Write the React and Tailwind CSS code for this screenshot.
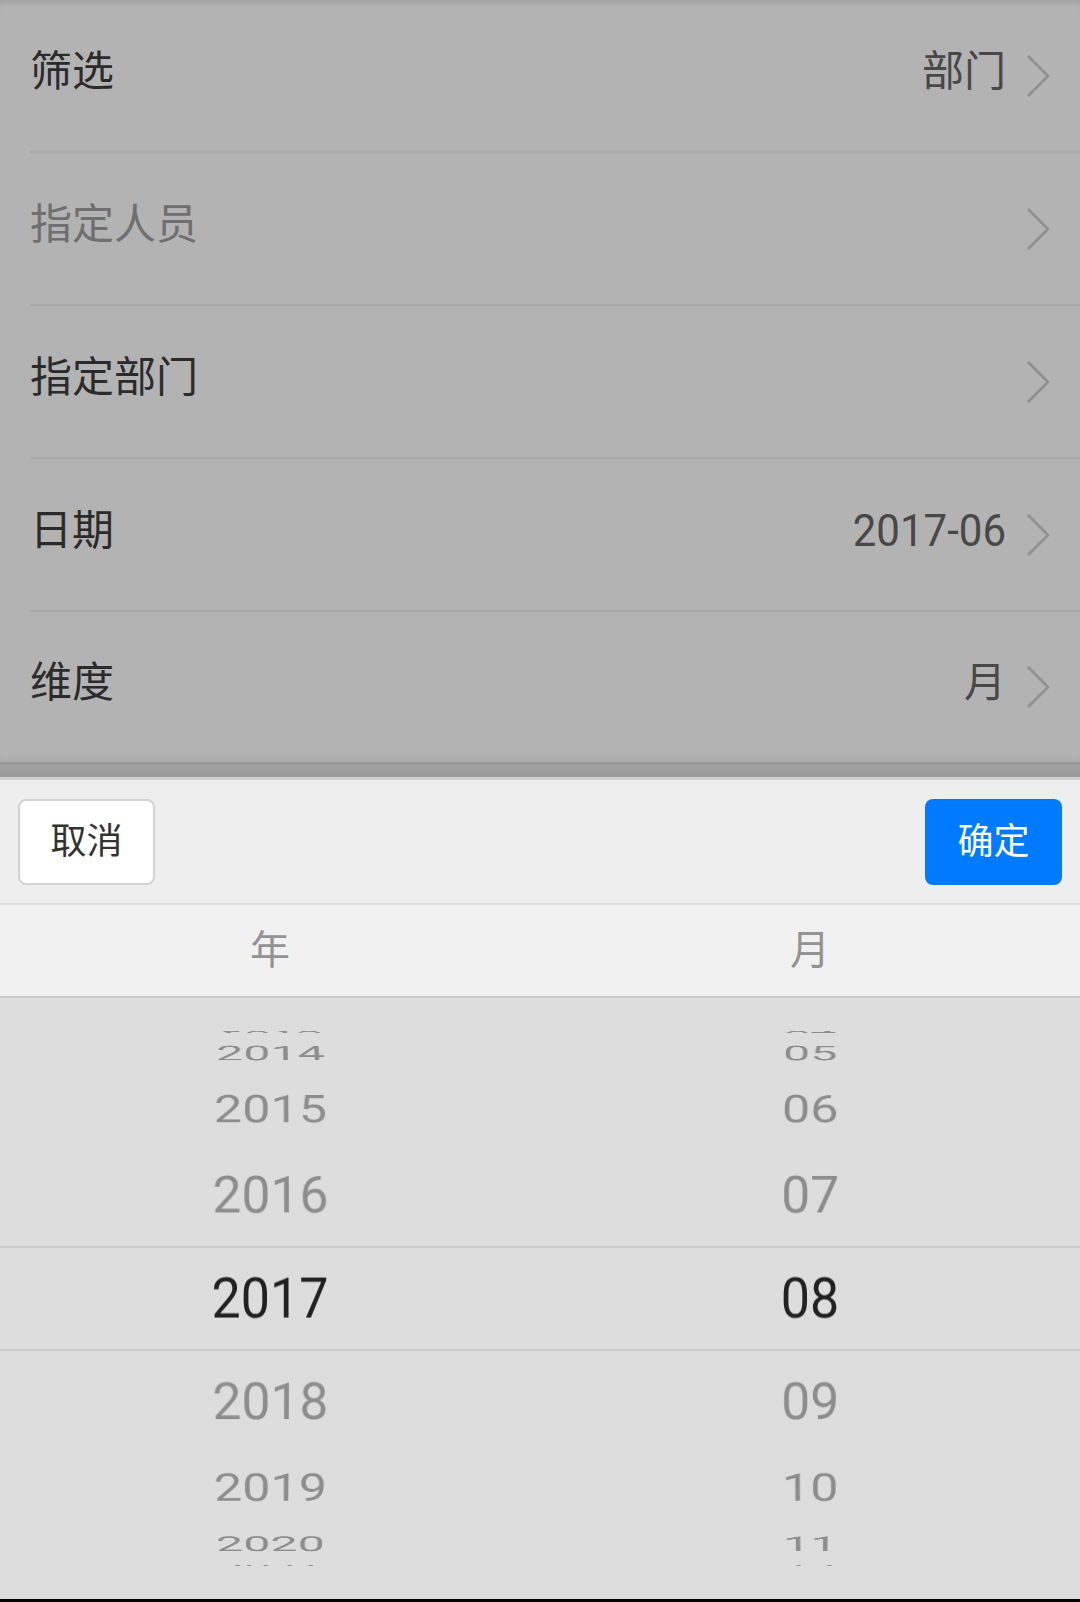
import React from 'react';

const rows = [
  { label: '筛选', value: '部门' },
  { label: '指定人员', value: '', muted: true },
  { label: '指定部门', value: '' },
  { label: '日期', value: '2017-06', digits: true },
  { label: '维度', value: '月' },
];

const years = ['2013', '2014', '2015', '2016', '2017', '2018', '2019', '2020', '2021'];
const months = ['04', '05', '06', '07', '08', '09', '10', '11', '12'];

const Chevron = () => (
  <svg width="24" height="44" viewBox="0 0 24 44" fill="none" className="shrink-0">
    <path d="M2 2 L22 22 L2 42" stroke="#8f8f8f" strokeWidth="2.6" />
  </svg>
);

// 滚轮列：每一项绕中心旋转 20°
const Wheel = ({ items, selected }) => (
  <div className="flex-1 grid place-items-center [perspective:2000px]">
    {items.map((item, i) => {
      const k = i - selected;
      return (
        <div
          key={item}
          className={`col-start-1 row-start-1 text-[52px] leading-none [backface-visibility:hidden] ${k === 0 ? 'text-[#222222]' : 'text-[#8d8d8d]'}`}
          style={{ transform: `translateZ(-305px) rotateX(${-k * 20}deg) translateZ(305px) scaleY(1.08)` }}
        >
          {item}
        </div>
      );
    })}
  </div>
);

export default function App() {
  return (
    <div
      className="w-[1080px] h-[1602px] flex flex-col overflow-hidden bg-[#b3b3b3]"
      style={{ fontFamily: 'Roboto, "Noto Sans CJK SC", sans-serif' }}
    >
      {/* 被遮罩的列表 */}
      <div className="flex flex-col shrink-0 shadow-[inset_0_7px_7px_-5px_rgba(0,0,0,0.12),inset_0_-9px_9px_-7px_rgba(0,0,0,0.06)]">
        {rows.map((row, i) => (
          <div
            key={row.label}
            className={`ml-[30px] pr-[30px] flex items-center justify-between ${i < rows.length - 1 ? 'h-[153px] border-b-2 border-[#a9a9a9]' : 'h-[150px]'}`}
          >
            <span className={`mb-[8px] text-[42px] leading-none ${row.muted ? 'text-[#6f6f6f]' : 'text-[#2b2b2b]'}`}>
              {row.label}
            </span>
            <div className="flex items-center gap-[20px]">
              {row.value && (
                <span className={`mb-[8px] text-[42px] leading-none text-[#484848] ${row.digits ? 'inline-block scale-y-[1.07]' : ''}`}>
                  {row.value}
                </span>
              )}
              <Chevron />
            </div>
          </div>
        ))}
      </div>

      <div className="h-[3px] shrink-0 bg-[#9b9b9b]" />
      <div className="h-[12px] shrink-0 bg-gradient-to-b from-[#a2a2a2] to-[#999999]" />
      <div className="h-[3px] shrink-0 bg-[#cfcfcf]" />

      {/* 选择器 */}
      <div className="h-[123px] shrink-0 bg-[#eeeeee] flex items-center justify-between px-[18px]">
        <button className="w-[137px] h-[86px] rounded-[8px] border-2 border-[#d2d2d2] bg-white text-[36px] leading-none text-[#333333]">
          取消
        </button>
        <button className="w-[137px] h-[86px] rounded-[8px] bg-[#007aff] text-[36px] leading-none text-white">
          确定
        </button>
      </div>
      <div className="h-[2px] shrink-0 bg-[#dcdcdc]" />
      <div className="h-[91px] shrink-0 bg-[#f1f1f1] flex items-center">
        <div className="flex-1 text-center text-[40px] leading-none text-[#939393]">年</div>
        <div className="flex-1 text-center text-[40px] leading-none text-[#939393]">月</div>
      </div>
      <div className="h-[2px] shrink-0 bg-[#c9c9c9]" />

      <div className="flex-1 min-h-0 grid overflow-hidden bg-[#dddddd]">
        <div className="col-start-1 row-start-1 self-center h-[105px] border-y-2 border-[#cacaca]" />
        <div className="col-start-1 row-start-1 flex h-full">
          <Wheel items={years} selected={4} />
          <Wheel items={months} selected={4} />
        </div>
      </div>
      <div className="h-[3px] shrink-0 bg-black" />
    </div>
  );
}
